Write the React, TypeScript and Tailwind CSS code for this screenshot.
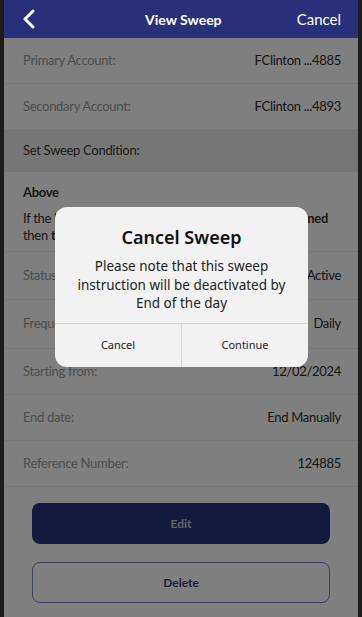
import React from "react";

const font = { fontFamily: "Lato, 'Noto Sans', sans-serif" };

function Row({ label, value, h = "h-[46px]" }: { label: string; value: string; h?: string }) {
  return (
    <div className={`flex items-center justify-between ${h} border-b border-[#eeeeee] pl-[19px] pr-[17px] text-[13px] tracking-[-0.3px]`}>
      <span className="text-[#9c9c9c]">{label}</span>
      <span className="text-[#2e2e2e]">{value}</span>
    </div>
  );
}

export default function App() {
  return (
    <div className="w-[362px] h-[617px] bg-[#1d1d1d] pl-[4px] pr-[4px] overflow-hidden" style={font}>
      <div className="relative flex h-full flex-col bg-white">
        <div className="flex h-[38px] shrink-0 items-center justify-between bg-[#28307a] pl-[18px] pr-[17px] text-white">
          <svg width="14" height="20" viewBox="0 0 14 20" fill="none">
            <path d="M11 2 L3 10 L11 18" stroke="white" strokeWidth="3" strokeLinecap="round" strokeLinejoin="round" />
          </svg>
          <span className="ml-[34px] text-[14px] font-bold">View Sweep</span>
          <span className="text-[15px]">Cancel</span>
        </div>
        <Row label="Primary Account:" value="FClinton ...4885" />
        <Row label="Secondary Account:" value="FClinton ...4893" />
        <div className="flex h-[42px] items-center bg-[#ececec] pl-[19px] text-[13px] tracking-[-0.3px] text-[#3a3a3a]">
          Set Sweep Condition:
        </div>
        <div className="flex h-[80px] flex-col border-b border-[#eeeeee] pl-[19px] pr-[30px] pt-[12px] text-[13px] tracking-[-0.3px] text-[#333] leading-[17px]">
          <span className="font-bold">Above</span>
          <div className="mt-[9px] flex justify-between whitespace-nowrap">
            <span>If the balance in Primary</span>
            <span className="font-bold">amount defined</span>
          </div>
          <div className="whitespace-nowrap">
            then <span className="font-bold">transfer</span>
          </div>
        </div>
        <Row label="Status:" value="Active" h="h-[48px]" />
        <Row label="Frequency:" value="Daily" h="h-[49px]" />
        <Row label="Starting from:" value="12/02/2024" h="h-[46px]" />
        <Row label="End date:" value="End Manually" />
        <Row label="Reference Number:" value="124885" />
        <div className="flex flex-col gap-[18px] px-[28px] pt-[16px]">
          <button className="h-[41px] rounded-[8px] bg-[#28347c] text-[12px] font-bold text-[#c8c8d8]">Edit</button>
          <button className="h-[41px] rounded-[8px] border-[1.5px] border-[#7a80bc] bg-white text-[12px] font-bold text-[#3e447f]">Delete</button>
        </div>

        <div className="absolute left-0 right-0 top-[38px] bottom-0 bg-black/50" />

        <div className="absolute left-[51px] top-[207px] flex h-[160px] w-[253px] flex-col overflow-hidden rounded-[12px] bg-[#f2f2f2]" style={{ fontFamily: "'Noto Sans', sans-serif" }}>
          <div className="pt-[18px] text-center text-[18px] font-semibold text-[#111] leading-[24px]">Cancel Sweep</div>
          <div className="mt-[8px] px-[10px] text-center text-[13.5px] leading-[18.5px] text-[#222]">
            Please note that this sweep instruction will be deactivated by End of the day
          </div>
          <div className="mt-auto flex h-[44px] border-t border-[#d6d6d6] text-[11px] text-[#222]">
            <div className="flex flex-1 items-center justify-center border-r border-[#d6d6d6]">Cancel</div>
            <div className="flex flex-1 items-center justify-center">Continue</div>
          </div>
        </div>
      </div>
    </div>
  );
}
